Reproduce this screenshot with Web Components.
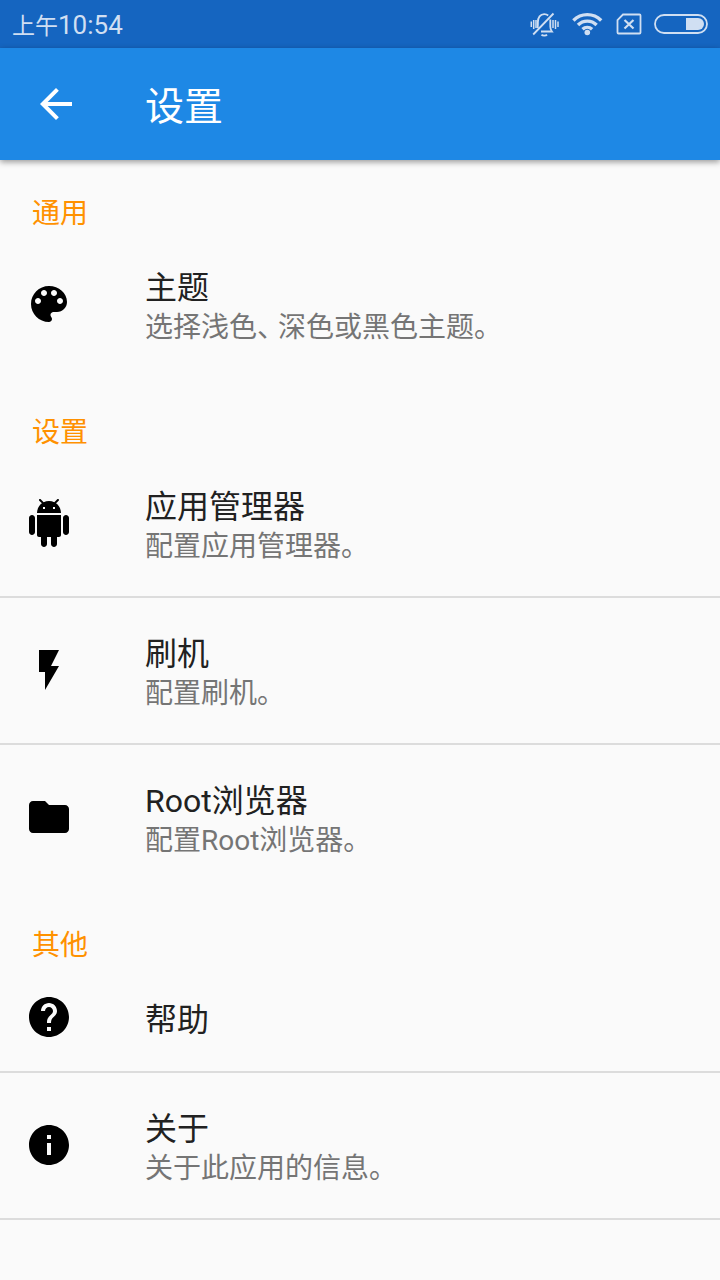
<!DOCTYPE html>
<html lang="zh-CN">
<head>
<meta charset="utf-8">
<meta name="viewport" content="width=device-width, initial-scale=1">
<title>设置</title>
<style>
  body {
    margin: 0;
    background: #fafafa;
    color: #212121;
    font-family: Roboto, "Noto Sans CJK SC", sans-serif;
  }
</style>
</head>
<body>
<settings-app></settings-app>

<template id="status-bar">
  <style>
    :host {
      display: flex; align-items: center; justify-content: space-between;
      height: 48px; padding: 0 12px; box-sizing: border-box;
      background: #1565c0; color: #d0dff2;
    }
    time { display: flex; align-items: baseline; font-size: 26px; line-height: 32px; padding-top: 4px; }
    time span { font-size: 23px; }
    .icons { display: flex; align-items: center; gap: 12px; }
    svg { display: block; fill: none; stroke: currentColor; }
  </style>
  <time datetime="10:54"><span>上午</span>10:54</time>
  <div class="icons">
    <svg width="32" height="26" viewBox="0 0 32 26" stroke-width="1.800">
      <path d="M9.500 17c.5-1.500.4-3 .4-6 0-4.500 2.300-7.900 6.300-7.900 1.700 0 3 .5 4 1.400M22.300 8.500v7c0 2 .3 3.300 1.600 5H13M5.200 23.500 25.500 2.500M13.500 23.700c1 1.200 4.500 1.200 5.500 0"/>
      <path d="M3.300 10.500v5.500M5.700 9v9M8 9v8M25 9v8M27.500 9v9M30 10.500v5.500" stroke-width="1.500"/>
    </svg>
    <svg width="32" height="26" viewBox="0 0 32 26" stroke-width="3.400">
      <path d="M1.400 9.500c7.800-7.800 20-7.800 27.800 0M6 14c5.200-5.200 13.400-5.200 18.600 0M10.500 18.300c2.800-2.600 6.800-2.600 9.600 0"/>
      <circle cx="15.300" cy="21.500" r="2.800" fill="currentColor" stroke="none"/>
    </svg>
    <svg width="26" height="22" viewBox="0 0 26 22" stroke-width="1.800">
      <path d="M7 1.500h16.500q1 0 1 1v17q0 1-1 1h-21q-1 0-1-1V7z"/>
      <path d="m8.500 7 9 8.500m0-8.500-9 8.500" stroke-width="2.200"/>
    </svg>
    <svg width="54" height="22" viewBox="0 0 54 22" stroke-width="1.800">
      <rect x="1" y="2" width="52" height="18" rx="9"/>
      <path d="M32 5h12a6 6 0 0 1 0 12H32z" fill="currentColor" stroke="none"/>
    </svg>
  </div>
</template>

<template id="app-bar">
  <style>
    :host {
      display: grid; grid-template-columns: 80px 1fr; column-gap: 33px; align-items: center;
      height: 112px; padding: 0 32px; box-sizing: border-box;
      background: #1e88e5; color: #fff;
      box-shadow: 0 2px 6px rgba(0, 0, 0, .4);
    }
    button { width: 48px; height: 48px; padding: 0; border: 0; background: none; color: inherit; }
    svg { display: block; fill: currentColor; }
    h1 { margin: 0; padding-top: 5px; font-size: 39px; line-height: 48px; font-weight: 400; }
  </style>
  <button type="button" aria-label="返回">
    <svg width="48" height="48" viewBox="0 0 24 24"><path d="M20 11H7.830l5.590-5.590L12 4l-8 8 8 8 1.410-1.410L7.830 13H20v-2z"/></svg>
  </button>
  <h1><slot></slot></h1>
</template>

<template id="settings-section">
  <style>
    :host { display: block; }
    h2 { margin: 0; padding: 36px 32px 0; font-size: 28px; line-height: 36px; font-weight: 400; color: #ff9100; }
    ::slotted(:last-child) { --divider: transparent; }
  </style>
  <section>
    <h2></h2>
    <slot></slot>
  </section>
</template>

<template id="settings-item">
  <style>
    :host { display: block; }
    a {
      display: grid; grid-template-columns: 48px 1fr; column-gap: 72px; align-items: center;
      padding: 29px 25px 30px; border-bottom: 2px solid var(--divider, #dcdcdc);
      color: inherit; text-decoration: none;
    }
    svg { display: block; fill: #000; }
    .text { padding-top: 7px; }
    .title { display: block; font-size: 32px; line-height: 41px; }
    ::slotted(p) { margin: 0; font-size: 28px; line-height: 38px; color: #757575; }
  </style>
  <a href="#">
    <svg width="48" height="48" viewBox="0 0 24 24" aria-hidden="true"><path/></svg>
    <div class="text"><span class="title"></span><slot></slot></div>
  </a>
</template>

<template id="settings-app">
  <style>
    :host { display: block; }
    header { position: relative; }
    .mark { font-feature-settings: "halt"; padding-right: 7px; }
    .divided { --divider: #dcdcdc; }
  </style>
  <header>
    <status-bar></status-bar>
    <app-bar>设置</app-bar>
  </header>
  <main>
    <settings-section label="通用">
      <settings-item label="主题" icon="palette"><p>选择浅色<span class="mark">、</span>深色或黑色主题。</p></settings-item>
    </settings-section>
    <settings-section label="设置">
      <settings-item label="应用管理器" icon="android"><p>配置应用管理器。</p></settings-item>
      <settings-item label="刷机" icon="flash"><p>配置刷机。</p></settings-item>
      <settings-item label="Root浏览器" icon="folder"><p>配置Root浏览器。</p></settings-item>
    </settings-section>
    <settings-section label="其他">
      <settings-item label="帮助" icon="help"></settings-item>
      <settings-item class="divided" label="关于" icon="info"><p>关于此应用的信息。</p></settings-item>
    </settings-section>
  </main>
</template>

<script>
const ICONS = {
  palette: "M12 3c-4.970 0-9 4.030-9 9s4.030 9 9 9c.83 0 1.500-.67 1.500-1.500 0-.39-.15-.74-.39-1.010-.23-.26-.38-.61-.38-.99 0-.83.67-1.500 1.500-1.500H16c2.760 0 5-2.240 5-5 0-4.420-4.030-8-9-8zm-5.500 9c-.83 0-1.500-.67-1.500-1.500S5.670 9 6.500 9 8 9.670 8 10.500 7.330 12 6.500 12zm3-4C8.670 8 8 7.330 8 6.500S8.670 5 9.500 5s1.500.67 1.500 1.500S10.330 8 9.500 8zm5 0c-.83 0-1.500-.67-1.500-1.500S13.670 5 14.500 5s1.500.67 1.500 1.500S15.330 8 14.500 8zm3 4c-.83 0-1.500-.67-1.500-1.500S16.670 9 17.500 9s1.500.67 1.500 1.500-.67 1.500-1.500 1.500z",
  android: "M6 18c0 .55.45 1 1 1h1v3.500c0 .83.67 1.500 1.500 1.500s1.500-.67 1.500-1.500V19h2v3.500c0 .83.67 1.500 1.500 1.500s1.500-.67 1.500-1.500V19h1c.55 0 1-.45 1-1V8H6v10zM3.500 8C2.670 8 2 8.670 2 9.500v7c0 .83.67 1.500 1.500 1.500S5 17.330 5 16.500v-7C5 8.670 4.330 8 3.500 8zm17 0c-.83 0-1.500.67-1.500 1.500v7c0 .83.67 1.500 1.500 1.500s1.500-.67 1.500-1.500v-7c0-.83-.67-1.500-1.500-1.500zm-4.970-5.840l1.300-1.300c.2-.2.2-.51 0-.71-.2-.2-.51-.2-.71 0l-1.480 1.480C13.850 1.230 12.950 1 12 1c-.96 0-1.860.23-2.660.63L7.850.15c-.2-.2-.51-.2-.71 0-.2.2-.2.51 0 .71l1.310 1.310C6.970 3.260 6 5.010 6 7h12c0-1.990-.97-3.750-2.470-4.840zM10 5H9V4h1v1zm5 0h-1V4h1v1z",
  flash: "M7 2v11h3v9l7-12h-4l4-8z",
  folder: "M10 4H4c-1.100 0-1.990.9-1.990 2L2 18c0 1.100.9 2 2 2h16c1.100 0 2-.9 2-2V8c0-1.100-.9-2-2-2h-8l-2-2z",
  help: "M12 2C6.480 2 2 6.480 2 12s4.480 10 10 10 10-4.480 10-10S17.520 2 12 2zm1 17h-2v-2h2v2zm2.070-7.750l-.9.920C13.450 12.900 13 13.500 13 15h-2v-.5c0-1.100.45-2.100 1.170-2.830l1.240-1.260c.37-.36.59-.86.59-1.410 0-1.100-.9-2-2-2s-2 .9-2 2H8c0-2.210 1.790-4 4-4s4 1.790 4 4c0 .88-.36 1.680-.93 2.250z",
  info: "M12 2C6.480 2 2 6.480 2 12s4.480 10 10 10 10-4.480 10-10S17.520 2 12 2zm1 15h-2v-6h2v6zm0-8h-2V7h2v2z"
};

class TemplateElement extends HTMLElement {
  constructor() {
    super();
    this.attachShadow({ mode: "open" })
      .append(document.getElementById(this.localName).content.cloneNode(true));
  }
}

class StatusBar extends TemplateElement {}
class AppBar extends TemplateElement {}
class SettingsApp extends TemplateElement {}

class SettingsSection extends TemplateElement {
  connectedCallback() {
    this.shadowRoot.querySelector("h2").textContent = this.getAttribute("label");
  }
}

class SettingsItem extends TemplateElement {
  connectedCallback() {
    this.shadowRoot.querySelector(".title").textContent = this.getAttribute("label");
    this.shadowRoot.querySelector("path").setAttribute("d", ICONS[this.getAttribute("icon")]);
  }
}

customElements.define("status-bar", StatusBar);
customElements.define("app-bar", AppBar);
customElements.define("settings-item", SettingsItem);
customElements.define("settings-section", SettingsSection);
customElements.define("settings-app", SettingsApp);
</script>
</body>
</html>
